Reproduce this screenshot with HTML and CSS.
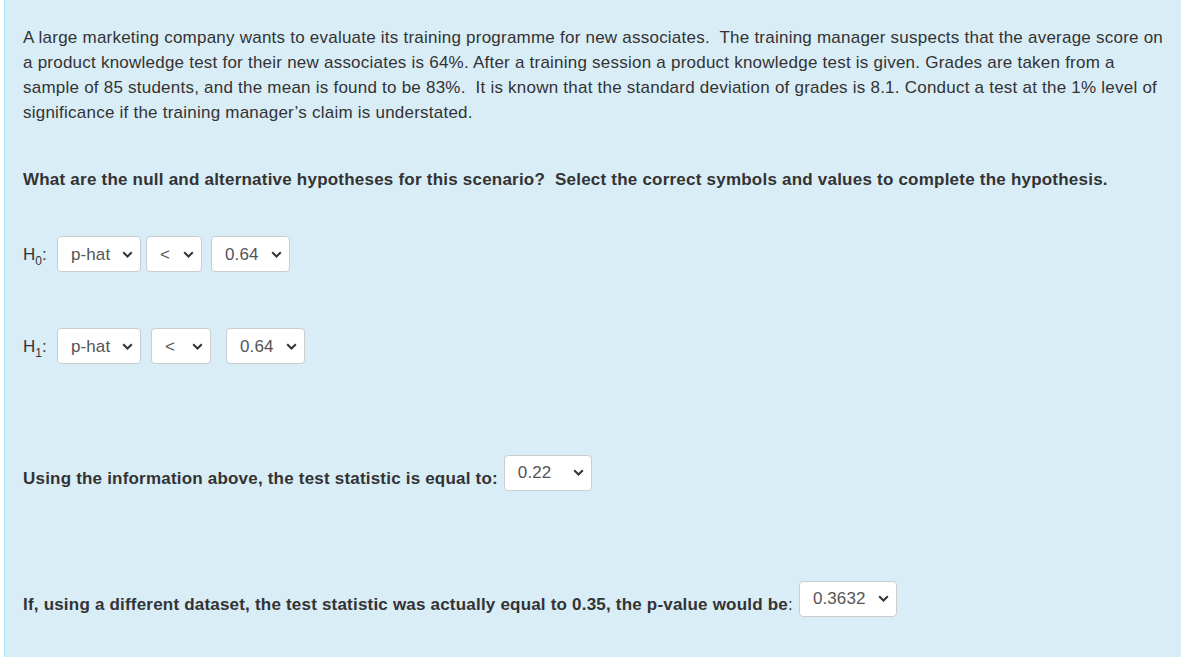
FILE: index.html
```html
<!DOCTYPE html>
<html>
<head>
<meta charset="utf-8">
<link rel="stylesheet" href="styles.css">
</head>
<body>
<div class="page">
  <div class="panel">
    <p class="intro">A large marketing company wants to evaluate its training programme for new associates.&nbsp; The training manager suspects that the average score on a product knowledge test for their new associates is 64%. After a training session a product knowledge test is given. Grades are taken from a sample of 85 students, and the mean is found to be 83%.&nbsp; It is known that the standard deviation of grades is 8.1. Conduct a test at the 1% level of significance if the training manager’s claim is understated.</p>

    <p class="question">What are the null and alternative hypotheses for this scenario?&nbsp; Select the correct symbols and values to complete the hypothesis.</p>

    <div class="hyp hyp0">
      <span class="hlabel">H<sub>0</sub>:</span>
      <div class="sel w84"><span class="val">p-hat</span><svg class="chev" viewBox="0 0 11 7"><path d="M1.2 1.2 L5.5 5.5 L9.8 1.2"/></svg></div>
      <div class="sel w56 g5"><span class="val">&lt;</span><svg class="chev" viewBox="0 0 11 7"><path d="M1.2 1.2 L5.5 5.5 L9.8 1.2"/></svg></div>
      <div class="sel w79 g9"><span class="val">0.64</span><svg class="chev" viewBox="0 0 11 7"><path d="M1.2 1.2 L5.5 5.5 L9.8 1.2"/></svg></div>
    </div>

    <div class="hyp hyp1">
      <span class="hlabel">H<sub>1</sub>:</span>
      <div class="sel w84"><span class="val">p-hat</span><svg class="chev" viewBox="0 0 11 7"><path d="M1.2 1.2 L5.5 5.5 L9.8 1.2"/></svg></div>
      <div class="sel w60 g10"><span class="val">&lt;</span><svg class="chev" viewBox="0 0 11 7"><path d="M1.2 1.2 L5.5 5.5 L9.8 1.2"/></svg></div>
      <div class="sel w79 g15"><span class="val">0.64</span><svg class="chev" viewBox="0 0 11 7"><path d="M1.2 1.2 L5.5 5.5 L9.8 1.2"/></svg></div>
    </div>

    <div class="ask ask1">
      <span class="asklabel">Using the information above, the test statistic is equal to:</span>
      <div class="sel w88 high"><span class="val">0.22</span><svg class="chev" viewBox="0 0 11 7"><path d="M1.2 1.2 L5.5 5.5 L9.8 1.2"/></svg></div>
    </div>

    <div class="ask ask2">
      <span class="asklabel">If, using a different dataset, the test statistic was actually equal to 0.35, the p-value would be<span class="thin">:</span></span>
      <div class="sel w98 high"><span class="val">0.3632</span><svg class="chev" viewBox="0 0 11 7"><path d="M1.2 1.2 L5.5 5.5 L9.8 1.2"/></svg></div>
    </div>
  </div>
</div>
</body>
</html>
```

FILE: styles.css
```css
html, body {
  margin: 0;
  padding: 0;
  background: #ffffff;
}

.page {
  padding-left: 4px;
  height: 657px;
  overflow: hidden;
}

.panel {
  background: #d9edf7;
  border-left: 1px solid #a9e6f5;
  height: 657px;
  padding: 25px 10px 0 18px;
  box-sizing: border-box;
  font-family: "Liberation Sans", Arial, sans-serif;
  font-size: 17px;
  letter-spacing: 0.23px;
  line-height: 25px;
  color: #333333;
}

.intro {
  margin: 0;
}

.question {
  margin: 42px 0 0 0;
  font-weight: bold;
  letter-spacing: 0.22px;
}

.hyp {
  display: flex;
  align-items: center;
}

.hyp0 {
  margin-top: 44px;
}

.hyp1 {
  margin-top: 56px;
}

.hlabel {
  width: 34px;
  display: inline-block;
  letter-spacing: 0;
}

.hlabel sub {
  font-size: 12px;
  line-height: 0;
  vertical-align: -5px;
}

.sel {
  display: flex;
  align-items: center;
  height: 36px;
  box-sizing: border-box;
  background: #ffffff;
  border: 1px solid #cccccc;
  border-radius: 4px;
  padding: 0 7px 0 13px;
  color: #555555;
  font-size: 17px;
  letter-spacing: 0.1px;
}

.sel.high {
  align-items: flex-start;
  padding-top: 4px;
}

.sel.high .chev {
  margin-top: 9px;
}

.val {
  flex: 0 0 auto;
}

.chev {
  margin-left: auto;
  width: 11px;
  height: 7px;
  fill: none;
  stroke: #333333;
  stroke-width: 2;
}

.w84 { width: 84px; }
.w56 { width: 56px; }
.w60 { width: 60px; }
.w79 { width: 79px; }
.w88 { width: 88px; }
.w98 { width: 98px; }
.g5 { margin-left: 5px; }
.g9 { margin-left: 9px; }
.g10 { margin-left: 10px; }
.g15 { margin-left: 15px; }

.ask {
  display: flex;
  align-items: flex-end;
}

.ask1 {
  margin-top: 91px;
}

.ask2 {
  margin-top: 90px;
}

.asklabel {
  font-weight: bold;
  margin-right: 6px;
  letter-spacing: 0.2px;
}

.thin {
  font-weight: normal;
}
```
